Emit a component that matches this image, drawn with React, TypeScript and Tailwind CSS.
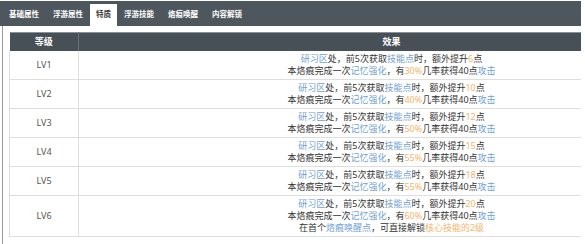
import React from 'react';

const tabs = ['基础属性', '浮游属性', '特质', '浮游技能', '烙痕唤醒', '内容解锁'];

const levels = [
    { lv: 'LV1', pts: '6', pct: '30%' },
    { lv: 'LV2', pts: '10', pct: '40%' },
    { lv: 'LV3', pts: '12', pct: '50%' },
    { lv: 'LV4', pts: '15', pct: '55%' },
    { lv: 'LV5', pts: '18', pct: '55%' },
    { lv: 'LV6', pts: '20', pct: '60%', extra: true },
];

const Blue = ({ children }: { children: React.ReactNode }) => (
    <span className="text-[#6f9fd4]">{children}</span>
);
const Gold = ({ children }: { children: React.ReactNode }) => (
    <span className="text-[#f3b468]">{children}</span>
);

const App: React.FC = () => {
    return (
        <div
            className="w-[581px] h-[244px] overflow-hidden bg-white"
            style={{ fontFamily: '"Noto Sans", "Noto Sans CJK SC", sans-serif' }}
        >
            {/* tab bar */}
            <div className="flex items-end h-[25px] mt-[1px] pl-[2px] bg-[#4f575e]">
                {tabs.map((t) => (
                    <div
                        key={t}
                        className={
                            t === '特质'
                                ? 'h-[22px] px-[6px] flex items-center bg-white text-[#333] text-[7.5px] font-bold'
                                : 'h-[22px] px-[7px] flex items-center text-white text-[7.5px] font-bold'
                        }
                    >
                        {t}
                    </div>
                ))}
            </div>

            {/* content panel */}
            <div className="ml-[2px] h-[218px] border-l border-[#9a9a9a] pl-[6px] pt-[6px]">
                <table className="w-[695px] border-collapse text-[9px] leading-[12px] text-[#333]">
                    <thead>
                        <tr className="bg-[#474f57] text-white font-bold border-t border-[#8a9096]">
                            <th className="w-[69px] h-[18px] border-r border-[#6b7177] font-bold">等级</th>
                            <th className="h-[18px] font-bold">效果</th>
                        </tr>
                    </thead>
                    <tbody>
                        {levels.map((row) => (
                            <tr key={row.lv} className="border-b border-[#dedede]">
                                <td className="border-l border-r border-[#dedede] text-center text-[#555] py-[2px]">
                                    {row.lv}
                                </td>
                                <td className="text-center py-[2px]">
                                    <div>
                                        <Blue>研习区</Blue>处，前5次获取<Blue>技能点</Blue>时，额外提升<Gold>{row.pts}</Gold>点
                                    </div>
                                    <div>
                                        本烙痕完成一次<Blue>记忆强化</Blue>，有<Gold>{row.pct}</Gold>几率获得40点<Blue>攻击</Blue>
                                    </div>
                                    {row.extra && (
                                        <div>
                                            在首个<Blue>烙痕唤醒点</Blue>，可直接解锁<Gold>核心技能的2级</Gold>
                                        </div>
                                    )}
                                </td>
                            </tr>
                        ))}
                    </tbody>
                </table>
            </div>
        </div>
    );
};

export default App;
